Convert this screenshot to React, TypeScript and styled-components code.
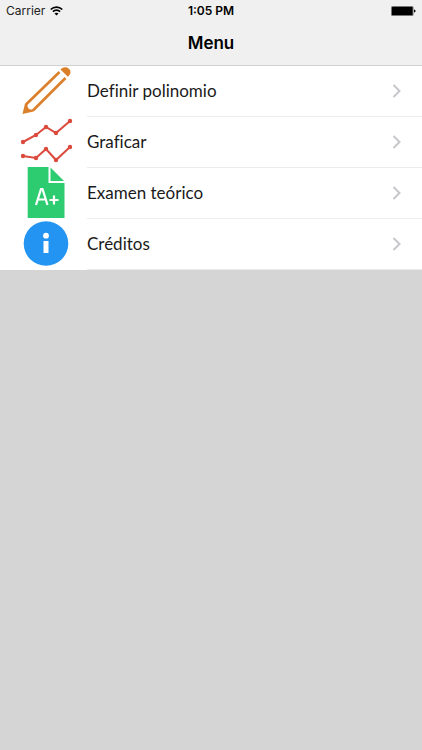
import React from "react";
import styled, { createGlobalStyle } from "styled-components";

const GlobalStyle = createGlobalStyle`
  * { box-sizing: border-box; }
  body { margin: 0; background: #d5d5d5; }
`;

const Screen = styled.div`
  min-height: 100vh;
  background: #d5d5d5;
  color: #000;
  font-family: Inter, "Liberation Sans", sans-serif;
`;

const Header = styled.header`
  background: #f0f0f0;
  border-bottom: 1px solid #d0d0d0;
`;

const StatusBar = styled.div`
  display: grid;
  grid-template-columns: 1fr auto 1fr;
  align-items: center;
  height: 22px;
  padding: 0 6px;
  font-size: 12px;
  line-height: 16px;
`;

const Carrier = styled.div`
  display: flex;
  align-items: center;
  gap: 5px;
  color: #222;
`;

const Clock = styled.time`
  font-weight: 600;
`;

const BatteryIcon = styled.svg`
  justify-self: end;
`;

const Title = styled.h1`
  margin: 0;
  height: 43px;
  font-size: 17px;
  line-height: 43px;
  font-weight: 600;
  text-align: center;
`;

const Menu = styled.ul`
  margin: 0;
  padding: 0;
  list-style: none;
  background: #fff;
`;

const Row = styled.button`
  display: flex;
  align-items: center;
  width: 100%;
  height: 51px;
  padding: 0 0 0 21px;
  border: 0;
  background: none;
  color: #1a1a1a;
  text-align: left;
  cursor: pointer;
`;

const RowIcon = styled.svg`
  flex: none;
  width: 51px;
  height: 51px;
  overflow: visible;
`;

const RowBody = styled.span`
  display: flex;
  flex: 1;
  align-items: center;
  justify-content: space-between;
  height: 51px;
  margin-left: 15px;
  padding-right: 20px;
  border-bottom: 1px solid #ececec;
  font: 17px/24px Lato, "Open Sans", sans-serif;
  font-variant-ligatures: none;
`;

function Pencil() {
  return (
    <RowIcon viewBox="0 0 51 51" fill="#dc7f2b" aria-hidden="true">
      <path d="M5 38.500 38.500 6M12 44.500 44.500 12" stroke="#dc7f2b" strokeWidth="2.600" fill="none" />
      <path d="M1.500 48 4 37.500 6.500 38C6 42 8 44 12 43.500L12.500 45.500Z" />
      <path d="M39.500 3.500C42 .5 46 .8 48 2.800 50.200 5 50.200 8.500 46.800 10.800Z" />
    </RowIcon>
  );
}

const series = [
  [[2, 25], [15, 18], [25, 10], [35, 16], [49, 4]],
  [[2, 39], [15, 41], [25, 32], [35, 43], [49, 30]],
];

function Graph() {
  return (
    <RowIcon viewBox="0 0 51 51" fill="#dc4a3e" aria-hidden="true">
      {series.map((points, index) => (
        <g key={index}>
          <polyline points={points.join(" ")} fill="none" stroke="#dc4a3e" strokeWidth="2" />
          {points.map(([x, y]) => (
            <circle key={x} cx={x} cy={y} r="2.200" />
          ))}
        </g>
      ))}
    </RowIcon>
  );
}

function Exam() {
  return (
    <RowIcon viewBox="0 0 51 51" fill="#2ecc71" aria-hidden="true">
      <path d="M6.700-1H27.500V15H43.500V50H6.700Z" />
      <path d="M29.500-.5V13H43Z" />
      <path d="M15 37 20 21H21.500L26.500 37M17 31.500H24.500M28.500 32H37.500M33 27.500V36.500" fill="none" stroke="#fff" strokeWidth="2.200" />
    </RowIcon>
  );
}

function Info() {
  return (
    <RowIcon viewBox="0 0 51 51" fill="#fff" aria-hidden="true">
      <circle cx="25" cy="24.500" r="22.300" fill="#2494f2" />
      <circle cx="25" cy="16.700" r="2.900" />
      <path d="M22.500 22H27.500V34H22.500Z" />
    </RowIcon>
  );
}

function Chevron() {
  return (
    <svg width="10" height="14" viewBox="0 0 10 14" fill="none" stroke="#c7c7cb" strokeWidth="2" aria-hidden="true">
      <path d="M1.500 1 7.500 7 1.500 13" />
    </svg>
  );
}

const items = [
  { label: "Definir polinomio", Icon: Pencil },
  { label: "Graficar", Icon: Graph },
  { label: "Examen teórico", Icon: Exam },
  { label: "Créditos", Icon: Info },
];

export default function App() {
  return (
    <Screen>
      <GlobalStyle />
      <Header>
        <StatusBar>
          <Carrier>
            Carrier
            <svg width="13" height="10" viewBox="0 0 13 10" fill="none" stroke="#000" strokeWidth="1.700" aria-label="Wi-Fi">
              <path d="M.7 3.500C4 .2 9 .2 12.300 3.500M2.900 5.700C5 3.700 8 3.700 10.100 5.700" />
              <path d="M6.500 9.500 4.500 7.500C5.700 6.500 7.300 6.500 8.500 7.500Z" fill="#000" stroke="none" />
            </svg>
          </Carrier>
          <Clock>1:05 PM</Clock>
          <BatteryIcon width="25" height="10" viewBox="0 0 25 10" aria-label="Battery full">
            <rect width="22.500" height="10" rx="1.500" fill="#777" />
            <rect x="1" y="1" width="20.500" height="8" rx=".5" />
            <path d="M23 3.500C25 3.500 25 6.500 23 6.500Z" />
          </BatteryIcon>
        </StatusBar>
        <Title>Menu</Title>
      </Header>
      <nav>
        <Menu>
          {items.map(({ label, Icon }) => (
            <li key={label}>
              <Row type="button">
                <Icon />
                <RowBody>
                  {label}
                  <Chevron />
                </RowBody>
              </Row>
            </li>
          ))}
        </Menu>
      </nav>
    </Screen>
  );
}
